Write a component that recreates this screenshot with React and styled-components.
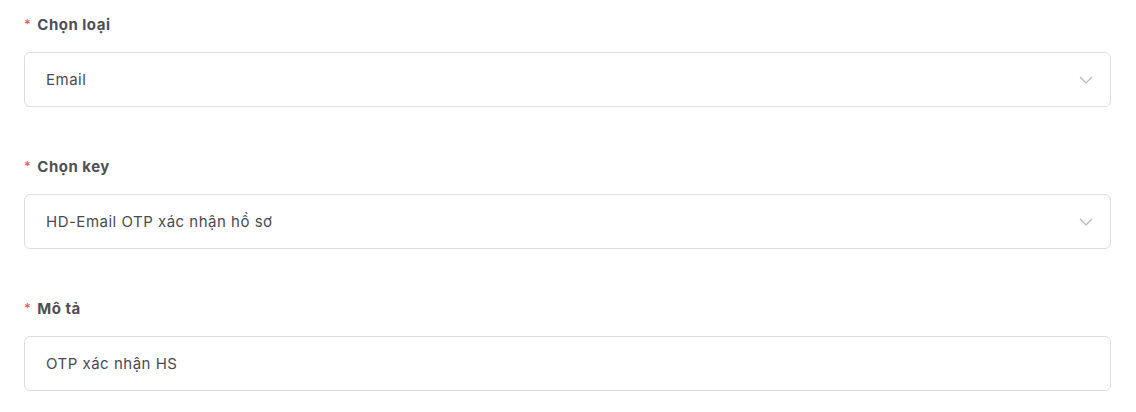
import React from "react";
import styled, { createGlobalStyle } from "styled-components";

const Global = createGlobalStyle`
  body {
    margin: 0;
    background: #fff;
    font-family: Inter, "Noto Sans", "Liberation Sans", sans-serif;
  }
`;

const Form = styled.div`
  padding: 14px 25px 0 24px;
`;

const Field = styled.div`
  margin-bottom: 49px;
  &:last-child {
    margin-bottom: 0;
  }
`;

const Label = styled.div`
  display: flex;
  align-items: center;
  height: 20px;
  margin-bottom: 18px;
  font-size: 15px;
  font-weight: 700;
  color: #4f4f55;
  letter-spacing: 0.5px;
`;

const Star = styled.span`
  color: #f5545a;
  font-size: 13px;
  margin-right: 6px;
  font-weight: 500;
`;

const Box = styled.div`
  height: 55px;
  box-sizing: border-box;
  border: 1px solid #dcdce3;
  border-radius: 6px;
  display: flex;
  align-items: center;
  justify-content: space-between;
  padding: 0 17px 0 21px;
  font-size: 15px;
  color: #4a4a50;
  letter-spacing: 0.5px;
`;

const Chevron = () => (
  <svg width="14" height="8" viewBox="0 0 14 8" fill="none">
    <path d="M1 1l6 6 6-6" stroke="#b6b6be" strokeWidth="1.2" />
  </svg>
);

const fields = [
  { label: "Chọn loại", value: "Email", select: true },
  { label: "Chọn key", value: "HD-Email OTP xác nhận hồ sơ", select: true },
  { label: "Mô tả", value: "OTP xác nhận HS", select: false },
];

export default function App() {
  return (
    <>
      <Global />
      <Form>
        {fields.map((f) => (
          <Field key={f.label}>
            <Label>
              <Star>*</Star>
              {f.label}
            </Label>
            <Box>
              <span>{f.value}</span>
              {f.select && <Chevron />}
            </Box>
          </Field>
        ))}
      </Form>
    </>
  );
}
